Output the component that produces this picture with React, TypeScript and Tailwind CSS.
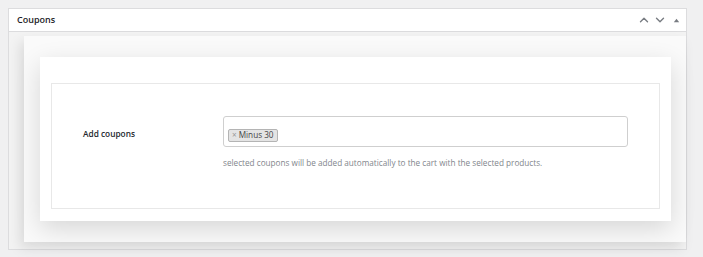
import { ChevronUp, ChevronDown } from "lucide-react";

const font = { fontFamily: '"Open Sans", "Noto Sans", sans-serif' };

function PostboxHeader() {
  return (
    <div className="flex h-[23px] items-center justify-between border-b border-[#dcdcde] pl-[8px] pr-[5px]">
      <h2 className="text-[9px] font-semibold text-[#1d2327]">Coupons</h2>
      <div className="flex items-center gap-[2px] text-[#787c82]">
        <ChevronUp size={14} strokeWidth={2.4} />
        <ChevronDown size={14} strokeWidth={2.4} />
        <svg width="9" height="9" viewBox="0 0 10 10" className="ml-[3px]">
          <path d="M5 3 L8 7 L2 7 Z" fill="#787c82" />
        </svg>
      </div>
    </div>
  );
}

function CouponField() {
  return (
    <div className="flex h-[126px] border border-[#e8e8e8] pl-[31px] pt-[32px]">
      <div className="w-[140px] pt-[12px] text-[8.3px] font-semibold text-[#23282d]">
        Add coupons
      </div>
      <div className="flex flex-col">
        <div className="h-[31px] w-[405px] rounded-[3px] border border-[#cfcfcf] bg-white px-[4px] pt-[3px]">
          <span className="inline-flex h-[13px] items-center rounded-[2px] border border-[#b4b4b4] bg-[#e4e4e4] px-[3px] text-[8.2px] text-[#444]">
            <span className="mr-[2px] text-[#999]">×</span>Minus 30
          </span>
        </div>
        <p className="mt-[10px] text-[8.2px] text-[#82868c]">
          selected coupons will be added automatically to the cart with the selected products.
        </p>
      </div>
    </div>
  );
}

export default function App() {
  return (
    <div className="h-[257px] w-[703px] bg-[#f0f0f1] pl-[8px] pr-[16px] pt-[8px]" style={font}>
      <div className="flex h-[242px] flex-col border border-[#dcdcde] bg-white">
        <PostboxHeader />
        <div className="flex-1 bg-[#f3f3f3] pb-[7px] pl-[15px] pt-[4px]">
          <div className="h-full bg-[#fafafa] pb-[21px] pl-[16px] pr-[15px] pt-[21px] shadow-[-4px_6px_12px_rgba(0,0,0,0.1)]">
            <div className="h-full bg-white px-[11px] pb-[11px] pt-[26px] shadow-[0_8px_24px_rgba(0,0,0,0.14)]">
              <CouponField />
            </div>
          </div>
        </div>
      </div>
    </div>
  );
}
